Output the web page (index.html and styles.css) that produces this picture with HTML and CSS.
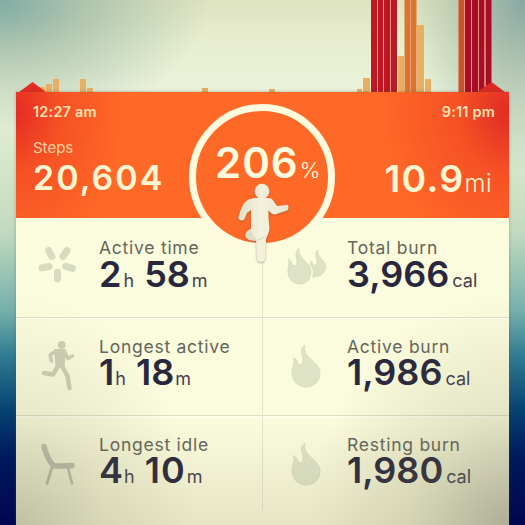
FILE: index.html
```html
<!DOCTYPE html>
<html lang="en">
<head>
    <meta charset="UTF-8">
    <meta name="viewport" content="width=device-width, initial-scale=1.0">
    <title>Steps</title>
    <link rel="stylesheet" href="styles.css">
</head>
<body>
    <!-- activity bars above the card -->
    <svg class="chart" viewBox="0 0 525 92" width="525" height="92">
        <g fill="#e8ae62">
            <rect x="40" y="87" width="5" height="5"/>
            <rect x="46" y="84" width="6" height="8"/>
            <rect x="53" y="79" width="6" height="13"/>
            <rect x="80" y="79" width="6" height="13"/>
            <rect x="87" y="88" width="6" height="4"/>
            <rect x="202" y="88" width="6" height="4"/>
            <rect x="269" y="89" width="6" height="3"/>
            <rect x="357" y="89" width="5" height="3"/>
            <rect x="363" y="78" width="7" height="14"/>
            <rect x="398" y="56" width="6" height="36"/>
            <rect x="417" y="25" width="7" height="67"/>
            <rect x="425" y="79" width="6" height="13"/>
        </g>
        <g fill="#bd1824">
            <rect x="371" y="0" width="6" height="92"/>
            <rect x="378" y="0" width="5" height="92"/>
            <rect x="384" y="0" width="6" height="92"/>
            <rect x="391" y="0" width="6" height="92"/>
        </g>
        <g fill="#dd742a">
            <rect x="404.500" y="0" width="6" height="92"/>
            <rect x="411" y="0" width="5.500" height="92"/>
            <rect x="458.500" y="0" width="5.500" height="92" fill="#ce5228"/>
        </g>
        <g fill="#a90c24">
            <rect x="465" y="0" width="6" height="92"/>
            <rect x="472" y="0" width="6" height="92"/>
            <rect x="479" y="0" width="5.500" height="92"/>
            <rect x="485.500" y="0" width="6" height="92"/>
        </g>
        <g fill="#e39482">
            <rect x="377" y="0" width="1" height="92"/>
            <rect x="383" y="0" width="1" height="92"/>
            <rect x="390" y="0" width="1" height="92"/>
            <rect x="410.300" y="0" width=".800" height="92"/>
            <rect x="464" y="0" width="1" height="92"/>
            <rect x="471" y="0" width="1" height="92"/>
            <rect x="478" y="0" width="1" height="92"/>
            <rect x="484.500" y="0" width="1" height="92"/>
        </g>
        <path d="M19 92 32.500 82 46 92z" fill="#e32c22"/>
        <path d="M477 92 491.500 82 505 92z" fill="#dd2922"/>
    </svg>

    <div class="card">
        <div class="header">
            <div class="times">
                <span class="start">12:27 am</span>
                <span class="end">9:11 pm</span>
            </div>
            <div class="totals">
                <div class="steps">
                    <div class="steps-label">Steps</div>
                    <div class="steps-num">20,604</div>
                </div>
                <div class="miles">10.9<span>mi</span></div>
            </div>
        </div>

        <div class="grid">
            <div class="cell">
                <svg class="icon" viewBox="0 0 60 70">
                    <path class="pill" d="M18.500 22.500l3.500 6M37 22.500l-4 6M12 39.800l7-1.300M35.500 38.300l7 2M27.500 44v7"/>
                </svg>
                <div class="info">
                    <div class="label">Active time</div>
                    <div class="value">2<i>h</i> <b>58</b><i>m</i></div>
                </div>
            </div>
            <div class="cell right">
                <svg class="icon" viewBox="0 0 60 70">
                    <path class="flame" d="M22 20C16 25 21 30 20 35c-1 4-4 3-5 1-1-2-1-4-4-5 2 4 0 7 0 12 0 8 5 13 12 13 6 0 11-5 11-12 0-10-14-13-12-24z"/>
                    <path class="flame" d="M41 22c-5 4 0 8-1 13-1 3-3 3-4 1l-2-3-1 3c4 5 4 8 2.500 13 8 0 13-4 13-10 0-8-9-9-7.500-17z"/>
                </svg>
                <div class="info">
                    <div class="label">Total burn</div>
                    <div class="value">3,966<i>cal</i></div>
                </div>
            </div>
            <div class="cell low">
                <svg class="icon" viewBox="0 0 60 70">
                    <g class="man">
                        <circle cx="31.700" cy="18" r="3.900"/>
                        <path class="torso" d="M25 23h10l-1.500 16h-7z"/>
                        <path class="limb" d="M26 24l-6 4 1.500 6M34.500 24.500l3.500 7 4.500-2.500"/>
                        <path class="limb leg" d="M28 39l-5 8.500-9-1.500M32 39l5.500 10 2 12"/>
                    </g>
                </svg>
                <div class="info">
                    <div class="label">Longest active</div>
                    <div class="value tight">1<i>h</i> <b>18</b><i>m</i></div>
                </div>
            </div>
            <div class="cell right low">
                <svg class="icon" viewBox="0 0 60 70">
                    <path class="flame" d="M28 18C21 23 27 28 26 35c-1 4-4 3-5 1-1-2-1-4-5-5 3 4-1 8-1 14 0 9 6 15 14 15s14-6 14-14c0-12-18-14-15-28z"/>
                </svg>
                <div class="info">
                    <div class="label">Active burn</div>
                    <div class="value">1,986<i>cal</i></div>
                </div>
            </div>
            <div class="cell low last">
                <svg class="icon" viewBox="0 0 60 70">
                    <g class="chair">
                        <path class="seat" d="M14 21.500c2 8 4 14 10 19.500 6 0 11 0 18-.500"/>
                        <path class="legs" d="M22 42l-5 16.500M38 43l4 15.500"/>
                    </g>
                </svg>
                <div class="info">
                    <div class="label">Longest idle</div>
                    <div class="value wide">4<i>h</i> <b>10</b><i>m</i></div>
                </div>
            </div>
            <div class="cell right low last">
                <svg class="icon" viewBox="0 0 60 70">
                    <path class="flame" d="M28 18C21 23 27 28 26 35c-1 4-4 3-5 1-1-2-1-4-5-5 3 4-1 8-1 14 0 9 6 15 14 15s14-6 14-14c0-12-18-14-15-28z"/>
                </svg>
                <div class="info">
                    <div class="label">Resting burn</div>
                    <div class="value">1,980<i>cal</i></div>
                </div>
            </div>
        </div>

        <!-- darker corners at the bottom of the card -->
        <div class="shade"></div>

        <!-- goal ring overlaps the header and the grid -->
        <div class="ring">
            <div class="percent">206<span>%</span></div>
        </div>
        <svg class="runner" viewBox="0 0 60 85" width="60" height="85">
            <defs>
                <linearGradient id="body" x1="0" x2="1">
                    <stop offset="0" stop-color="#e0dfc9"/>
                    <stop offset=".450" stop-color="#f4f2dc"/>
                    <stop offset="1" stop-color="#e8e6d0"/>
                </linearGradient>
            </defs>
            <path d="M22 48c-5 1-8 3-8.500 7-.500 4 4 6 9.500 6l6-1z" fill="#dddcc4"/>
            <circle cx="30" cy="11.300" r="7.500" fill="url(#body)"/>
            <path d="M18 19c7-2 17-2 22 0l5 7 10-1c2 0 2 5 0 5.500L43 34.500c-3 0-5-2-6.500-4.500v8l1 10c0 5-3 8-3.500 12l-1 19c-1 4-7.500 4-8 0L24 59c-1-3-5-5-5-9V30l-4 3-2.500 6c-2 3-7 1-6-2 2-7 4.500-16 11.500-18z" fill="url(#body)"/>
            <path d="M24.500 60.500l8.500-3.500" stroke="#cfcdb5" stroke-width=".800"/>
        </svg>
    </div>
</body>
</html>
```
FILE: styles.css
```css
* {
    margin: 0;
    padding: 0;
    box-sizing: border-box;
}

body {
    width: 525px;
    height: 525px;
    overflow: hidden;
    font-family: Inter, "Liberation Sans", sans-serif;
    background:
        radial-gradient(ellipse 210px 130px at 0 0, #82aca5 0%, rgba(150, 180, 160, .6) 45%, rgba(225, 232, 205, 0) 100%),
        radial-gradient(ellipse 120px 170px at 525px 0, #88a8a3 0%, rgba(155, 180, 160, .6) 50%, rgba(225, 232, 205, 0) 100%),
        linear-gradient(#dee3c1 0, #e8efd0 45px, #eaf2da 90px, #cfe1c5 190px, #c3dabf 230px, #76b1ab 310px, #317c93 355px, #064272 410px, #001b5d 455px, #000550 525px);
}

.chart {
    display: block;
}

.card {
    position: relative;
    width: 493px;
    height: 433px;
    margin-left: 16px;
    background-color: #fbfbdd;
    box-shadow: 0 0 3px rgba(70, 90, 70, .4);
}

.header {
    height: 126px;
    padding: 11px 17px 0;
    color: #fff5d0;
    background:
        radial-gradient(ellipse 110px 150px at 0 20px, #e52b24 0%, rgba(240, 65, 35, .6) 40%, rgba(255, 105, 40, 0) 100%),
        radial-gradient(ellipse 130px 150px at 493px 20px, #e02b24 0%, rgba(240, 65, 35, .6) 40%, rgba(255, 105, 40, 0) 100%),
        #ff6927;
}

.times {
    display: flex;
    justify-content: space-between;
    height: 18px;
    line-height: 17px;
    font-size: 14.500px;
    font-weight: 600;
    color: #fde0b0;
}

.start {
    letter-spacing: .2px;
}

.end {
    margin-right: -3px;
    letter-spacing: .2px;
}

.totals {
    display: flex;
    justify-content: space-between;
}

.steps-label {
    margin-top: 17px;
    line-height: 20px;
    font-size: 15px;
    color: #fdcf9d;
}

.steps-num {
    line-height: 40px;
    font-size: 34px;
    font-weight: 600;
    letter-spacing: 2px;
}

.miles {
    margin-top: 37px;
    line-height: 42px;
    font-size: 37.500px;
    font-weight: 600;
    letter-spacing: 1.200px;
}

.miles span {
    font-size: 24px;
    font-weight: 300;
    letter-spacing: .5px;
}

.grid {
    display: grid;
    grid-template-columns: 246px 247px;
    grid-template-rows: 100px 98px 109px;
}

.cell {
    display: flex;
    padding: 18px 0 0 14px;
    border-bottom: 1px solid #dfdfc3;
    box-shadow: 0 1px 0 #fffff0;
}

.low {
    padding-top: 17px;
}

.last {
    height: 94px;
    border-bottom: 0;
    box-shadow: none;
}

.right {
    border-left: 1px solid #e5e5cb;
}

.icon {
    width: 60px;
    height: 70px;
    margin-top: -8px;
    flex: none;
}

.info {
    padding-left: 9px;
    white-space: nowrap;
}

.right .info {
    padding-left: 10px;
}

.label {
    line-height: 24px;
    font-size: 17.500px;
    letter-spacing: .750px;
    color: #65665b;
}

.value {
    line-height: 29px;
    font-size: 36px;
    font-weight: 600;
    color: #29273d;
}

.low .value {
    line-height: 27px;
}

.value b {
    margin-left: 1px;
    font-weight: 600;
}

.value i {
    margin-left: 2px;
    font-size: 18px;
    font-style: normal;
    font-weight: 400;
    color: #424150;
}

.right .value i {
    margin-left: 3px;
}

.tight i {
    margin-left: 1px;
}

.wide b {
    letter-spacing: 1px;
}

.wide i {
    margin-left: 1px;
}

.pill {
    fill: none;
    stroke: #d7dbc0;
    stroke-width: 7;
    stroke-linecap: round;
}

.flame {
    fill: #dfe3c6;
    stroke: #d0d5b9;
    stroke-width: .700;
}

.man {
    fill: #cdd0b5;
    stroke: #cdd0b5;
    stroke-linecap: round;
    stroke-linejoin: round;
}

.man circle {
    stroke: none;
}

.torso {
    stroke-width: 2;
}

.limb {
    fill: none;
    stroke-width: 3.500;
}

.leg {
    stroke-width: 4.500;
}

.chair {
    fill: none;
    stroke: #c3c7b0;
    stroke-linecap: round;
    stroke-linejoin: round;
}

.seat {
    stroke-width: 5.500;
}

.legs {
    stroke-width: 2.800;
}

.ring {
    position: absolute;
    left: 173px;
    top: 12px;
    width: 146px;
    height: 146px;
    padding-top: 27px;
    border: 7px solid #fffbdc;
    border-radius: 50%;
    background-color: #ff6927;
}

.percent {
    margin-left: 19px;
    line-height: 50px;
    font-size: 42px;
    font-weight: 600;
    letter-spacing: 1px;
    color: #fffbdc;
    white-space: nowrap;
}

.percent span {
    margin-left: 1px;
    font-size: 22px;
    font-weight: 300;
    letter-spacing: 0;
}

.runner {
    position: absolute;
    left: 216px;
    top: 88px;
    filter: drop-shadow(0 1px 1px rgba(90, 80, 50, .45));
}

.shade {
    position: absolute;
    left: 0;
    right: 0;
    top: 126px;
    bottom: 0;
    background:
        radial-gradient(ellipse 200px 230px at 100% 100%, rgba(85, 85, 75, .38), rgba(110, 110, 75, .15) 50%, rgba(110, 110, 75, 0)),
        radial-gradient(ellipse 180px 230px at 0 100%, rgba(85, 85, 65, .26), rgba(110, 110, 75, .12) 50%, rgba(110, 110, 75, 0)),
        linear-gradient(rgba(110, 110, 70, 0) 65%, rgba(110, 110, 70, .15));
}
```
